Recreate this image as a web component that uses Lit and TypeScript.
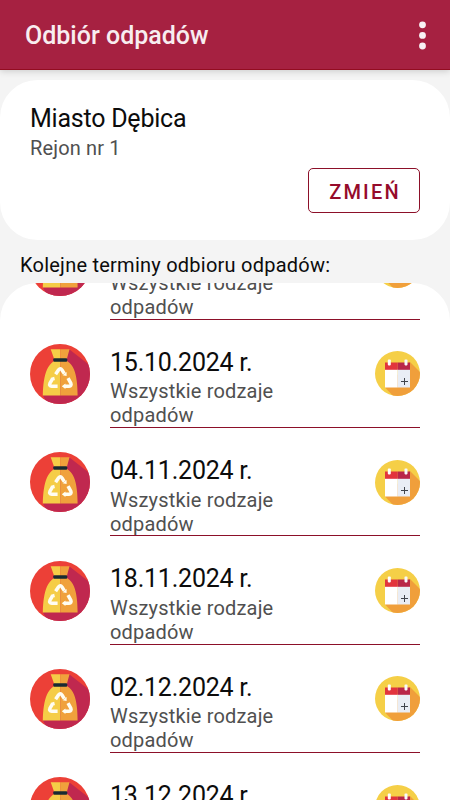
import { LitElement, html, css, svg } from "lit";
import { customElement, state } from "lit/decorators.js";

const bagIcon = svg`
  <defs>
    <clipPath id="disc"><circle cx="30" cy="30" r="30"/></clipPath>
  </defs>
  <g clip-path="url(#disc)">
    <rect width="60" height="60" fill="#ec4037"/>
    <path d="M39.5 5.5 L62 23 V62 H18 L13 51.5 Z" fill="#c0284f"/>
    <path d="M20.7 5.2 H30.2 V51.5 H12.8 C13 41 14.2 32 17 25.5 C18.6 22 21 19 24 17 V14.5 Z" fill="#f5cd47"/>
    <path d="M30.2 5.2 H39.5 L37 14.5 V17 C40.5 19 42.5 22 44 25.5 C46.6 32 47.6 41 47.6 51.5 H30.2 Z" fill="#f0a13c"/>
    <rect x="23.3" y="14.2" width="13.9" height="3.6" rx="1" fill="#182a32"/>
    <g fill="none" stroke="#fffdf2" stroke-width="3.5" stroke-linejoin="round">
      <path d="M25.6 30.2 L28.6 25.8 Q30.4 23.8 32 26 L34.3 29.6"/>
      <path d="M22.7 34.6 L20 39.2 Q18.8 41.9 21.8 42.2 H27.6"/>
      <path d="M38 34.2 L40.8 39.2 Q41.9 41.9 39 42.2 H35"/>
    </g>
    <path d="M36.6 28 V32 L32.6 31.2 Z M35.4 39.4 V45 L31.8 42.2 Z M20.4 34 L24.2 32.8 L25 36.4 Z" fill="#fffdf2"/>
  </g>`;

const calendarIcon = svg`
  <defs>
    <clipPath id="sun"><circle cx="22.5" cy="22.5" r="22.5"/></clipPath>
  </defs>
  <g clip-path="url(#sun)">
    <rect width="45" height="45" fill="#f5cf47"/>
    <path d="M35 11 L47 23 V47 H20 L10 36.5 Z" fill="#f09f3b"/>
    <rect x="10" y="18" width="12.7" height="18.5" fill="#fff"/>
    <rect x="22.7" y="18" width="12.3" height="18.5" fill="#e9edf5"/>
    <rect x="10" y="11.5" width="12.7" height="7.3" fill="#e2343d"/>
    <rect x="22.7" y="11.5" width="12.3" height="7.3" fill="#b92649"/>
    <rect x="12.8" y="8.6" width="3" height="5.8" rx=".8" fill="#fff"/>
    <rect x="29.5" y="8.6" width="3" height="5.8" rx=".8" fill="#f8f8fb"/>
    <path d="M29.5 27 V34 M26 30.5 H33" stroke="#41454d" stroke-width="1" fill="none"/>
  </g>`;

@customElement("pickup-row")
export class PickupRow extends LitElement {
  static properties = { date: { type: String }, kind: { type: String } };
  declare date: string;
  declare kind: string;

  static styles = css`
    :host {
      display: flex;
      flex: none;
      box-sizing: border-box;
      height: 108.33px;
      padding: 0 30px;
      gap: 20px;
    }
    .bag { flex: none; width: 60px; height: 60px; margin-top: 24.3px; }
    .body {
      flex: 1;
      display: flex;
      box-sizing: border-box;
      justify-content: space-between;
      border-bottom: 1px solid #8c1029;
    }
    .text { width: 190px; padding-top: 28px; }
    .date { font-size: 25px; line-height: 30px; letter-spacing: -0.22px; color: #0c0c0c; white-space: nowrap; }
    .kind { font-size: 20px; line-height: 24px; letter-spacing: 0.18px; color: #505050; margin-top: 1.6px; }
    .calendar { flex: none; width: 45px; height: 45px; margin-top: 31.5px; }
  `;

  render() {
    return html`
      <svg class="bag" viewBox="0 0 60 60">${bagIcon}</svg>
      <div class="body">
        <div class="text">
          <div class="date">${this.date}</div>
          <div class="kind">${this.kind}</div>
        </div>
        <svg class="calendar" viewBox="0 0 45 45">${calendarIcon}</svg>
      </div>
    `;
  }
}

@customElement("app-root")
export class AppRoot extends LitElement {
  @state() private dates = [
    "01.10.2024 r.",
    "15.10.2024 r.",
    "04.11.2024 r.",
    "18.11.2024 r.",
    "02.12.2024 r.",
    "13.12.2024 r.",
  ];

  static styles = css`
    :host {
      display: flex;
      flex-direction: column;
      height: 800px;
      overflow: hidden;
      background: #f4f4f4;
      font-family: Roboto, sans-serif;
      color: #0c0c0c;
    }
    .bar {
      flex: none;
      box-sizing: border-box;
      height: 70px;
      padding: 1px 25px 0;
      display: flex;
      align-items: center;
      justify-content: space-between;
      background: #a62141;
      border-bottom: 1px solid #930c20;
      box-shadow: 0 1px 7px rgba(0, 0, 0, 0.18);
    }
    .title { margin: 0; padding-top: 2px; font-size: 25px; line-height: 30px; font-weight: 500; color: #f8edf0; }
    .more { width: 7px; height: 29px; margin-right: -1px; fill: #f9f2f4; }
    .card {
      flex: none;
      box-sizing: border-box;
      height: 160px;
      margin-top: 10px;
      padding: 24px 30px 0;
      border-radius: 37.5px;
      background: #fff;
      display: flex;
      flex-direction: column;
    }
    .city { font-size: 25px; line-height: 30px; letter-spacing: -0.23px; }
    .area { font-size: 20px; line-height: 24px; letter-spacing: 0.16px; margin-top: 2px; color: #505050; }
    .change {
      align-self: flex-end;
      box-sizing: border-box;
      width: 112px;
      height: 45px;
      margin-top: 8px;
      padding: 2px 0 0 2px;
      border: 1px solid #8c1029;
      border-radius: 5px;
      background: #fff;
      color: #960b2b;
      font: 500 20px Roboto, sans-serif;
      letter-spacing: 2.2px;
    }
    .heading { flex: none; height: 43px; margin: 0; padding-left: 20px; font-size: 20px; font-weight: 400; line-height: 50px; letter-spacing: 0.24px; }
    .list {
      flex: 1;
      min-height: 0;
      overflow: hidden;
      display: flex;
      flex-direction: column;
      background: #fff;
      border-radius: 37.5px 37.5px 0 0;
    }
    .list pickup-row:first-child { margin-top: -71.5px; }
  `;

  render() {
    return html`
      <header class="bar">
        <h1 class="title">Odbiór odpadów</h1>
        <svg class="more" viewBox="0 0 7 29">
          <circle cx="3.5" cy="3.8" r="3.4"/><circle cx="3.5" cy="14.4" r="3.4"/><circle cx="3.5" cy="25" r="3.4"/>
        </svg>
      </header>
      <section class="card">
        <div class="city">Miasto Dębica</div>
        <div class="area">Rejon nr 1</div>
        <button class="change">ZMIEŃ</button>
      </section>
      <h2 class="heading">Kolejne terminy odbioru odpadów:</h2>
      <main class="list">
        ${this.dates.map((d) => html`<pickup-row .date=${d} .kind=${"Wszystkie rodzaje odpadów"}></pickup-row>`)}
      </main>
    `;
  }
}
